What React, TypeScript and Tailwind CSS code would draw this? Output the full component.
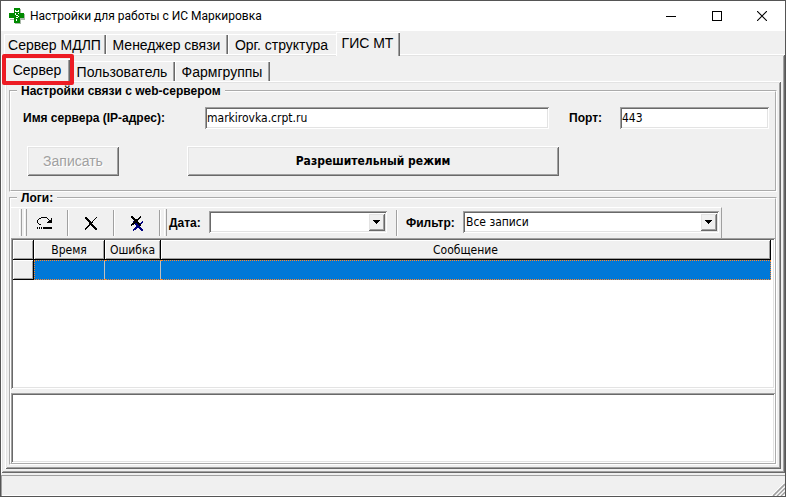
import { useState } from 'react';
import type { ReactNode } from 'react';
import clsx from 'clsx';

const raised =
  'shadow-[inset_1px_1px_0_#fff,inset_-1px_-1px_0_#696969,inset_2px_2px_0_#e3e3e3,inset_-2px_-2px_0_#a0a0a0]';
const sunken =
  'shadow-[inset_1px_1px_0_#a0a0a0,inset_-1px_-1px_0_#fff,inset_2px_2px_0_#696969,inset_-2px_-2px_0_#e3e3e3]';
const tahoma = "font-['DejaVu_Sans_Condensed','DejaVu_Sans',sans-serif] text-[12px]";

type Tab = { label: string; width: string };

const mainTabs: Tab[] = [
  { label: 'Сервер МДЛП', width: 'w-[102px]' },
  { label: 'Менеджер связи', width: 'w-[122px]' },
  { label: 'Орг. структура', width: 'w-[108px]' },
  { label: 'ГИС МТ', width: 'w-[64px]' },
];

const serverTabs: Tab[] = [
  { label: 'Сервер', width: 'w-[65px]' },
  { label: 'Пользователь', width: 'w-[105px]' },
  { label: 'Фармгруппы', width: 'w-[95px]' },
];

type TabRowProps = {
  name: string;
  tabs: Tab[];
  initial: number;
  className?: string;
};

const TabRow = ({ name, tabs, initial, className }: TabRowProps) => {
  const [active, setActive] = useState(initial);

  return (
    <div
      aria-label={name}
      className={clsx('flex h-[23px] shrink-0 items-end', className)}
      role="tablist"
    >
      {tabs.map(({ label, width }, i) => (
        <button
          aria-selected={i === active}
          className={clsx(
            'shrink-0 border-t border-l border-white bg-[#f0f0f0] pr-0.5 text-center text-[14px] whitespace-nowrap',
            width,
            i === active ? 'z-10 -mb-0.5 h-[24px] pb-1' : 'h-[20px]',
            i + 1 !== active && 'shadow-[inset_-1px_0_0_#696969,inset_-2px_0_0_#a0a0a0]',
          )}
          key={label}
          onClick={() => setActive(i)}
          role="tab"
          type="button"
        >
          {label}
        </button>
      ))}
    </div>
  );
};

type GroupProps = { title: string; className?: string; children: ReactNode };

const Group = ({ title, className, children }: GroupProps) => (
  <fieldset
    className={clsx('flex min-w-0 flex-col border-2 border-white [border-style:groove]', className)}
  >
    <legend className="ml-1.5 px-1 text-[12px] leading-3 font-bold">{title}</legend>
    {children}
  </fieldset>
);

type ComboProps = { id: string; options: string[]; className?: string };

const Combo = ({ id, options, className }: ComboProps) => (
  <div className={clsx('relative h-[22px] bg-white', sunken, className)}>
    <select
      className={clsx('h-full w-full appearance-none bg-transparent pr-5 pl-[3px] font-normal', tahoma)}
      id={id}
    >
      {options.map((option) => (
        <option key={option}>{option}</option>
      ))}
    </select>
    <span
      className={clsx(
        'pointer-events-none absolute top-0.5 right-0.5 flex h-[18px] w-[17px] items-center justify-center bg-[#f0f0f0]',
        raised,
      )}
    >
      <svg height="4" shapeRendering="crispEdges" viewBox="0 0 7 4" width="7">
        <path d="M0 0h7v1H0zM1 1h5v1H1zM2 2h3v1H2zM3 3h1v1H3z" />
      </svg>
    </span>
  </div>
);

const Grip = () => (
  <span className="mt-px h-[27px] w-[3px] shrink-0 border-r border-l border-r-[#a0a0a0] border-l-white" />
);

const Separator = () => (
  <span className="mt-0.5 h-[26px] w-0.5 shrink-0 border-r border-l border-r-white border-l-[#a0a0a0]" />
);

type ToolProps = { label: string; className?: string; children: ReactNode };

const Tool = ({ label, className, children }: ToolProps) => (
  <button
    aria-label={label}
    className={clsx('flex h-[30px] shrink-0 items-center justify-center', className)}
    type="button"
  >
    {children}
  </button>
);

const RefreshIcon = () => (
  <svg height="12" shapeRendering="crispEdges" viewBox="0 0 16 12" width="16">
    <path d="M4 0h6v1H4zM2 1h2v1H2zM10 1h1v1h-1zM1 2h1v1H1zM11 2h1v1h-1zM0 3h1v3H0zM14 1h1v1h-1zM12 3h3v1h-3zM14 2h1v1h-1zM11 4h4v1h-4zM10 5h5v1h-5zM1 6h1v1H1zM2 7h2v1H2zM0 10h1v2H0zM2 10h1v2H2zM4 10h1v2H4zM6 10h9v2H6z" />
  </svg>
);

const DeleteIcon = () => (
  <svg height="13" shapeRendering="crispEdges" viewBox="0 0 12 13" width="12">
    <path d="M0 0h2v1H0zM0 1h3v1H0zM1 2h3v1H1zM2 3h3v1H2zM3 4h3v1H3zM4 5h4v1H4zM4 6h3v1H4zM4 7h4v1H4zM3 8h2v1H3zM6 8h3v1H6zM2 9h2v1H2zM7 9h3v1H7zM1 10h2v1H1zM8 10h3v1H8zM0 11h2v1H0zM9 11h3v1H9zM0 12h1v1H0zM10 12h2v1h-2zM11 0h1v1h-1zM10 1h1v1h-1zM9 2h1v1H9zM8 3h1v1H8zM7 4h1v1H7z" />
  </svg>
);

const smallCross =
  'M0 0h2v1H0zM0 1h3v1H0zM1 2h3v1H1zM2 3h6v1H2zM3 4h4v1H3zM3 5h4v1H3zM2 6h6v1H2zM1 7h3v1H1zM6 7h3v1H6zM0 8h3v1H0zM7 8h3v1H7zM0 9h1v1H0zM8 9h2v1H8zM9 0h1v1H9zM8 1h2v1H8zM7 2h2v1H7z';

const DeleteAllIcon = () => (
  <svg height="15" shapeRendering="crispEdges" viewBox="0 0 12 15" width="12">
    <path d={smallCross} fill="#000080" transform="translate(2 5)" />
    <path d={smallCross} />
  </svg>
);

const PharmacyIcon = () => (
  <svg height="16" shapeRendering="crispEdges" viewBox="0 0 16 16" width="16">
    <path d="M6 1h6v5h4v6h-4v4H6v-4H1v-1h5z" fill="#a9b8a9" />
    <path d="M5 0h6v5h4v5h-4v5H5v-5H0V5h5z" fill="#008a00" />
    <path
      d="M6 2h1v2H6zM7 3h2v1H7zM9 2h1v2H9zM6 5h1v2H6zM9 5h1v1H9zM7 7h2v1H7zM9 8h1v1H9zM7 9h2v1H7zM7 11h1v2H7z"
      fill="#fff"
    />
  </svg>
);

const TitleBar = () => (
  <header className="flex h-[30px] shrink-0 items-center bg-white pl-2">
    <PharmacyIcon />
    <h1 className="ml-[5px] flex-1 font-[Roboto,sans-serif] text-[12px] whitespace-nowrap">
      Настройки для работы с ИС Маркировка
    </h1>
    <button aria-label="Свернуть" className="flex h-full w-[46px] items-center justify-center" type="button">
      <svg height="10" shapeRendering="crispEdges" viewBox="0 0 10 10" width="10">
        <path d="M0 5h10v1H0z" />
      </svg>
    </button>
    <button aria-label="Развернуть" className="flex h-full w-[45px] items-center justify-center" type="button">
      <svg height="10" shapeRendering="crispEdges" viewBox="0 0 10 10" width="10">
        <path d="M0.5 0.5h9v9h-9z" fill="none" stroke="#000" />
      </svg>
    </button>
    <button aria-label="Закрыть" className="flex h-full w-[46px] items-center justify-center" type="button">
      <svg height="10" viewBox="0 0 10 10" width="10">
        <path d="M0 0l10 10M10 0L0 10" stroke="#000" strokeWidth="1.1" />
      </svg>
    </button>
  </header>
);

const headCell =
  'h-5 border-r border-b border-black bg-[#f0f0f0] p-0 text-center font-normal shadow-[inset_1px_1px_0_#fff,inset_-1px_-1px_0_#a0a0a0]';
const rowCell = 'h-5 border-y border-dotted border-[#ff8728] bg-[#0078d7] p-0';

const LogTable = () => (
  <div className={clsx('min-h-[151px] flex-1 bg-white p-0.5 pr-1', sunken)}>
    <table className={clsx('w-full table-fixed border-separate border-spacing-0 leading-4', tahoma)}>
      <colgroup>
        <col className="w-[21px]" />
        <col className="w-[71px]" />
        <col className="w-[56px]" />
        <col />
      </colgroup>
      <thead>
        <tr>
          <td className={headCell} />
          <th className={headCell}>Время</th>
          <th className={headCell}>Ошибка</th>
          <th className={headCell}>Сообщение</th>
        </tr>
      </thead>
      <tbody>
        <tr>
          <td className={headCell} />
          <td className={clsx(rowCell, 'border-l shadow-[inset_-1px_0_0_#c0c0c0]')} />
          <td className={clsx(rowCell, 'shadow-[inset_-1px_0_0_#c0c0c0]')} />
          <td className={clsx(rowCell, 'border-r')} />
        </tr>
      </tbody>
    </table>
  </div>
);

export default function App() {
  return (
    <div className="flex min-h-screen flex-col border border-[#555] bg-[#f0f0f0] font-['Liberation_Sans',Arial,sans-serif] text-black">
      <TitleBar />
      <TabRow className="pl-[3px]" initial={3} name="Разделы настроек" tabs={mainTabs} />

      <main className={clsx('relative flex flex-1 flex-col p-1', raised)}>
        <TabRow initial={0} name="ГИС МТ" tabs={serverTabs} />
        <span className="pointer-events-none absolute top-0 left-px z-20 h-[31px] w-[72px] rounded-xs border-4 border-[#ed1c24]" />

        <div className={clsx('flex flex-1 flex-col p-1', raised)}>
          <Group title="Настройки связи с web-сервером">
            <div className="flex items-center pt-2.5 pr-1.5 pl-3 text-[12px] font-bold">
              <label className="w-[182px] shrink-0" htmlFor="host">
                Имя сервера (IP-адрес):
              </label>
              <input
                className={clsx('h-[22px] min-w-0 flex-1 bg-white px-0.5 font-normal', sunken, tahoma)}
                defaultValue="markirovka.crpt.ru"
                id="host"
              />
              <label className="ml-5 w-[51px] shrink-0" htmlFor="port">
                Порт:
              </label>
              <input
                className={clsx('h-[22px] w-[149px] bg-white px-0.5 font-normal', sunken, tahoma)}
                defaultValue="443"
                id="port"
              />
            </div>
            <div className="mt-[17px] flex gap-[68px] pb-3.5 pl-4">
              <button
                className={clsx(
                  'h-[30px] w-[92px] text-[14px] text-[#a0a0a0] [text-shadow:1px_1px_0_#fff]',
                  raised,
                )}
                disabled
                type="button"
              >
                Записать
              </button>
              <button className={clsx('h-[30px] w-[372px] font-bold', raised, tahoma)} type="button">
                Разрешительный режим
              </button>
            </div>
          </Group>

          <Group className="flex-1" title="Логи:">
            <div className="mt-[3px] flex h-[31px] w-[711px] border-t border-r border-t-white border-r-[#a0a0a0] pl-2 text-[12px] font-bold">
              <Grip />
              <span className="w-0.5" />
              <Grip />
              <Tool className="w-[40px] pr-1" label="Обновить">
                <RefreshIcon />
              </Tool>
              <Separator />
              <Tool className="w-[44px]" label="Удалить запись">
                <DeleteIcon />
              </Tool>
              <Separator />
              <Tool className="w-[44px]" label="Удалить все записи">
                <DeleteAllIcon />
              </Tool>
              <Separator />
              <span className="w-[3px]" />
              <Grip />
              <label className="ml-0.5 w-[40px] shrink-0 self-center" htmlFor="date">
                Дата:
              </label>
              <Combo className="mt-[3px] w-[178px] shrink-0" id="date" options={['']} />
              <span className="w-[9px]" />
              <Separator />
              <label className="ml-2 w-[57px] shrink-0 self-center" htmlFor="filter">
                Фильтр:
              </label>
              <Combo className="mt-[3px] w-[256px] shrink-0" id="filter" options={['Все записи']} />
            </div>
            <LogTable />
            <textarea
              aria-label="Текст сообщения"
              className={clsx('mt-1 h-[70px] resize-none bg-white p-1', sunken, tahoma)}
            />
          </Group>
        </div>
      </main>

      <footer className="flex h-[23px] shrink-0 items-end justify-end pt-0.5">
        <div className="flex h-full flex-1 items-end justify-end border-t border-l border-[#a0a0a0] shadow-[inset_0_-1px_0_#fff]">
          <svg height="13" viewBox="0 0 13 13" width="13">
            <path d="M1 13L13 1M5 13l8-8M9 13l4-4" stroke="#a0a0a0" strokeWidth="1.6" />
            <path d="M0 12L12 0M4 12.500l9-9M8 12.500l5-5" stroke="#fff" />
          </svg>
        </div>
      </footer>
    </div>
  );
}
